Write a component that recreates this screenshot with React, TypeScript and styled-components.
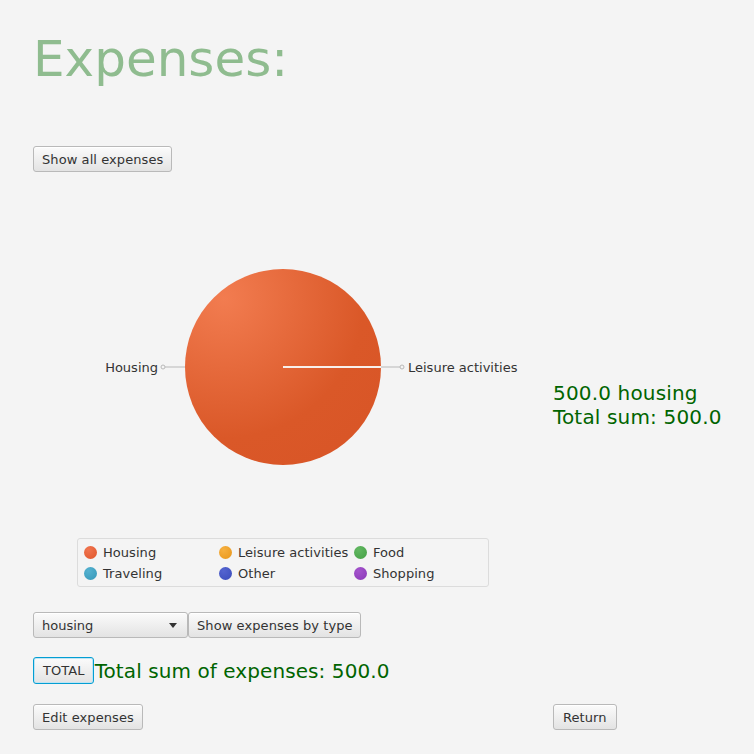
import React from "react";
import styled, { createGlobalStyle, css } from "styled-components";

const GlobalStyle = createGlobalStyle`
    html, body {
        margin: 0;
        padding: 0;
        background: #f4f4f4;
        font-family: "DejaVu Sans", "Liberation Sans", sans-serif;
        color: #333;
    }
`;

const Page = styled.div`
    width: 754px;
    height: 754px;
    box-sizing: border-box;
    padding: 30px 0 0 33px;
    display: flex;
    flex-direction: column;
`;

const Title = styled.h1`
    margin: 0;
    font-size: 50px;
    line-height: 58px;
    font-weight: normal;
    color: #8fbc8f;
`;

const Button = styled.button<{ $focused?: boolean }>`
    height: 26px;
    box-sizing: border-box;
    padding: 0 8px;
    font-family: inherit;
    font-size: 13px;
    letter-spacing: 0.08px;
    color: #333;
    border: 1px solid #b9b9b9;
    border-radius: 3px;
    background: linear-gradient(#fbfbfb, #e3e3e3);
    box-shadow: inset 0 1px 0 #ffffff;
    cursor: pointer;
    white-space: nowrap;
    ${(p) =>
        p.$focused &&
        css`
            height: 27px;
            padding: 0 8px 0 9px;
            border-color: #039ed3;
            box-shadow: inset 0 0 0 1px #bfe4f3;
        `}
`;

const TopBar = styled.div`
    margin-top: 58px;
    display: flex;
`;

const ChartRow = styled.div`
    display: grid;
    grid-template-columns: 520px auto;
`;

const ChartColumn = styled.div`
    display: flex;
    flex-direction: column;
`;

const PieSvg = styled.svg`
    display: block;
    width: 520px;
    height: 366px;
`;

const Legend = styled.div`
    margin-left: 44px;
    width: 412px;
    height: 49px;
    box-sizing: border-box;
    padding: 2.5px 6px 0;
    border: 1px solid #dcdcdc;
    border-radius: 3px;
    display: grid;
    grid-template-columns: repeat(3, 135px);
    grid-auto-rows: 21px;
    align-content: start;
`;

const LegendItem = styled.div`
    display: flex;
    align-items: center;
    gap: 6px;
    font-size: 13px;
    letter-spacing: 0.05px;
    color: #333;
    white-space: nowrap;
`;

const Dot = styled.span<{ $color: string; $light: string }>`
    width: 13px;
    height: 13px;
    border-radius: 50%;
    background: radial-gradient(circle at 35% 30%, ${(p) => p.$light}, ${(p) => p.$color});
`;

const SideText = styled.div`
    padding-top: 209px;
    font-size: 20px;
    line-height: 24px;
    letter-spacing: 0.16px;
    color: #006400;
    white-space: nowrap;
`;

const ControlRow = styled.div<{ $top: number }>`
    margin-top: ${(p) => p.$top}px;
    display: flex;
    align-items: center;
`;

const Combo = styled.div`
    width: 155px;
    height: 26px;
    box-sizing: border-box;
    padding: 0 8px;
    display: flex;
    align-items: center;
    justify-content: space-between;
    font-size: 13px;
    color: #333;
    border: 1px solid #b9b9b9;
    border-radius: 3px;
    background: linear-gradient(#fbfbfb, #e3e3e3);
    box-shadow: inset 0 1px 0 #ffffff;
`;

const Arrow = styled.span`
    width: 0;
    height: 0;
    margin-right: 2px;
    border-left: 4px solid transparent;
    border-right: 4px solid transparent;
    border-top: 5px solid #333;
`;

const GreenLabel = styled.span`
    font-size: 20px;
    line-height: 24px;
    letter-spacing: 0.08px;
    color: #006400;
    margin-left: 1px;
`;

const BottomRow = styled.div`
    margin-top: 20px;
    display: grid;
    grid-template-columns: 520px auto;
    justify-items: start;
`;

const legendItems = [
    { name: "Housing", color: "#e0562a", light: "#f07550" },
    { name: "Leisure activities", color: "#e8961a", light: "#f6b040" },
    { name: "Food", color: "#45a045", light: "#62b862" },
    { name: "Traveling", color: "#3597b8", light: "#55b2d0" },
    { name: "Other", color: "#3a4cbb", light: "#5464d0" },
    { name: "Shopping", color: "#8a38b8", light: "#a454cc" },
];

const PieChart = () => {
    const cx = 250;
    const cy = 195;
    const r = 98;
    return (
        <PieSvg viewBox="0 0 520 366">
            <defs>
                <radialGradient id="slice0" cx="0.2" cy="0.15" r="0.95">
                    <stop offset="0" stopColor="#f27c50" />
                    <stop offset="0.75" stopColor="#da5828" />
                    <stop offset="1" stopColor="#d95627" />
                </radialGradient>
            </defs>
            <circle cx={cx} cy={cy} r={r} fill="url(#slice0)" />
            <line x1={cx} y1={cy} x2={cx + r} y2={cy} stroke="#f8f0ec" strokeWidth="2" />
            <line x1={cx - r} y1={cy} x2={132} y2={cy} stroke="#b8b8b8" strokeWidth="1" />
            <circle cx={130} cy={cy} r="2" fill="none" stroke="#b8b8b8" strokeWidth="1" />
            <line x1={cx + r} y1={cy} x2={367} y2={cy} stroke="#b8b8b8" strokeWidth="1" />
            <circle cx={369} cy={cy} r="2" fill="none" stroke="#b8b8b8" strokeWidth="1" />
            <text
                x={125}
                y={cy}
                textAnchor="end"
                dominantBaseline="central"
                fontFamily="DejaVu Sans, sans-serif"
                fontSize="13"
                fill="#333"
            >
                Housing
            </text>
            <text
                x={375}
                y={cy}
                dominantBaseline="central"
                fontFamily="DejaVu Sans, sans-serif"
                fontSize="13"
                fill="#333"
            >
                Leisure activities
            </text>
        </PieSvg>
    );
};

export default function App() {
    return (
        <>
            <GlobalStyle />
            <Page>
                <Title>Expenses:</Title>
                <TopBar>
                    <Button>Show all expenses</Button>
                </TopBar>
                <ChartRow>
                    <ChartColumn>
                        <PieChart />
                        <Legend>
                            {legendItems.map((item) => (
                                <LegendItem key={item.name}>
                                    <Dot $color={item.color} $light={item.light} />
                                    {item.name}
                                </LegendItem>
                            ))}
                        </Legend>
                    </ChartColumn>
                    <SideText>
                        500.0 housing
                        <br />
                        Total sum: 500.0
                    </SideText>
                </ChartRow>
                <ControlRow $top={25}>
                    <Combo>
                        housing
                        <Arrow />
                    </Combo>
                    <Button style={{ width: 173 }}>Show expenses by type</Button>
                </ControlRow>
                <ControlRow $top={19}>
                    <Button $focused>TOTAL</Button>
                    <GreenLabel>Total sum of expenses: 500.0</GreenLabel>
                </ControlRow>
                <BottomRow>
                    <Button>Edit expenses</Button>
                    <Button style={{ padding: "0 9px" }}>Return</Button>
                </BottomRow>
            </Page>
        </>
    );
}
